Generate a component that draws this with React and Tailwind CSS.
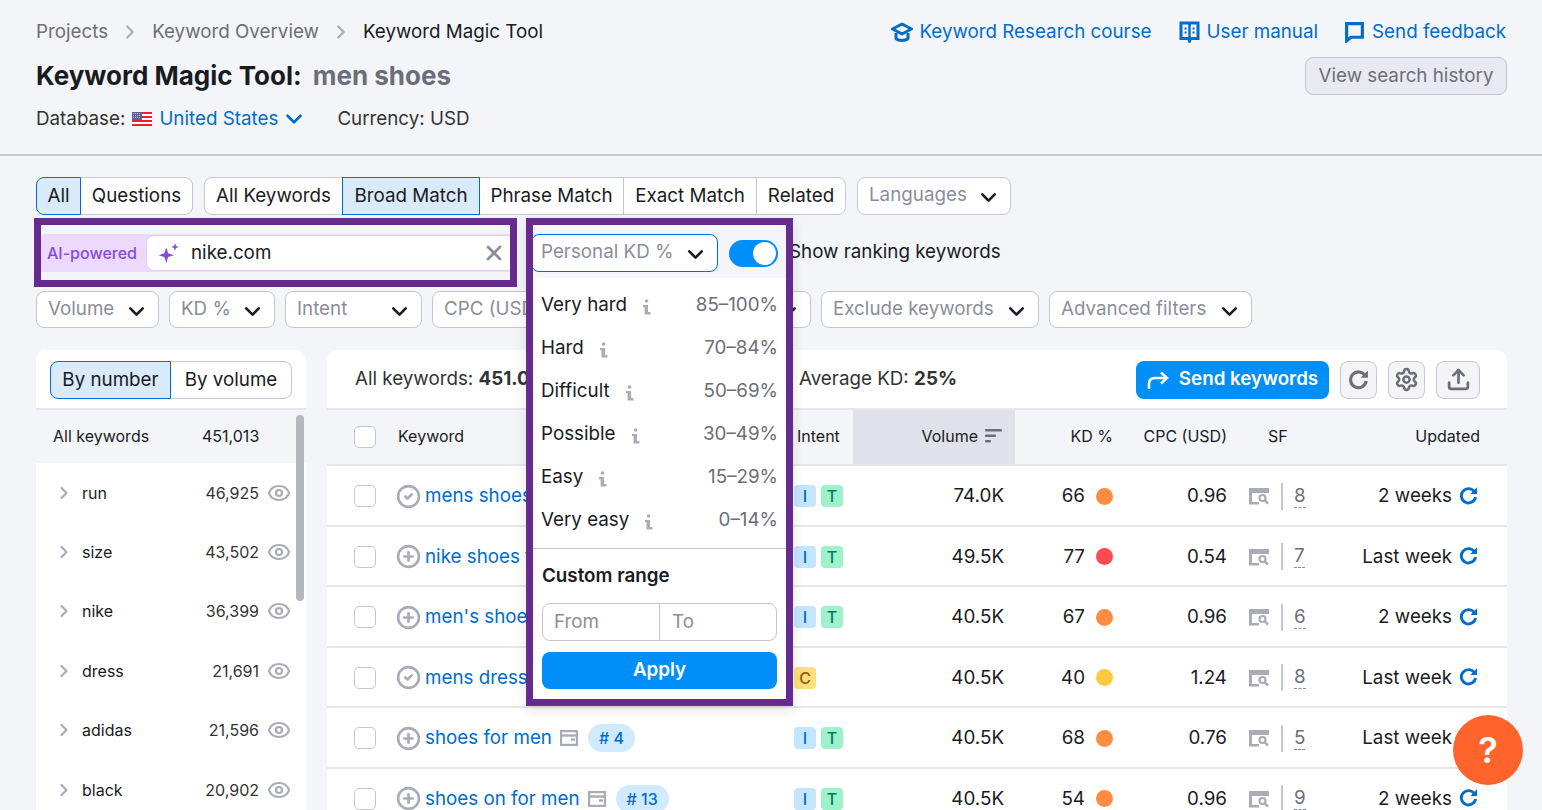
import { ChevronDown, ChevronRight, X, Eye, Settings, Upload, CircleCheck, CirclePlus } from "lucide-react";

const RefreshIcon = ({ className }) => (
    <svg viewBox="0 0 20 20" fill="none" className={className}>
        <path d="M16.4 6.4A7.5 7.5 0 1 0 17.4 11.5" stroke="currentColor" strokeWidth="3" />
        <path d="M19 1.4V8.4h-7z" fill="currentColor" />
    </svg>
);

const SfIcon = () => (
    <svg viewBox="0 0 22 18" className="w-[22px] h-[18px] text-[#a9abb6]" fill="none">
        <path d="M1 1h20v5H4v9h7v2.5H1z" fill="currentColor" />
        <circle cx="14.5" cy="11" r="3" stroke="currentColor" strokeWidth="2.2" />
        <path d="M16.5 13.2l3.5 3.5" stroke="currentColor" strokeWidth="2.4" />
    </svg>
);

const PageIcon = () => (
    <svg viewBox="0 0 18 16" className="w-[18px] h-[16px] text-[#a9abb6] shrink-0" fill="none">
        <rect x="1" y="1" width="16" height="14" stroke="currentColor" strokeWidth="2.4" />
        <path d="M1 5.5h16" stroke="currentColor" strokeWidth="2.4" />
        <path d="M11 9.5h4" stroke="currentColor" strokeWidth="2.4" />
    </svg>
);

const InfoIcon = () => (
    <svg viewBox="0 0 9 16" className="w-[9px] h-[16px] text-[#a9abb6]" fill="currentColor">
        <circle cx="4.6" cy="2" r="1.8" />
        <path d="M1 6h5v7h2.4v2.4H2.6V8.2H1z" />
    </svg>
);

const SortIcon = () => (
    <svg viewBox="0 0 17 14" className="w-[17px] h-[14px] text-[#6c6e79]" fill="currentColor">
        <rect x="0" y="0" width="17" height="2.6" rx="1" />
        <rect x="0" y="5.5" width="11" height="2.6" rx="1" />
        <rect x="0" y="11" width="6" height="2.6" rx="1" />
    </svg>
);

const Flag = () => (
    <svg viewBox="0 0 20 14" className="w-[20px] h-[14px]">
        <rect width="20" height="14" fill="#fff" />
        <path d="M0 0h20v2H0zM0 4h20v2H0zM0 8h20v2H0zM0 12h20v2H0z" fill="#e8222c" />
        <rect width="10" height="8" fill="#5d5f9e" />
        <path d="M1 1.5h8M1 3.5h8M1 5.5h8" stroke="#c7c9e0" strokeWidth="0.8" strokeDasharray="1 1" />
    </svg>
);

function Seg({ w, active, first, last, children }) {
    return (
        <div
            className={`${w} h-full flex items-center justify-center border text-[18.8px] -ml-px first:ml-0 ${active ? "bg-[#d9ebfa] border-[#006dca] z-10" : "bg-white border-[#c4c7cf]"} ${first ? "rounded-l-[8px]" : ""} ${last ? "rounded-r-[8px]" : ""}`}
        >
            {children}
        </div>
    );
}

function Select({ w, label }) {
    return (
        <div className={`${w} shrink-0 h-[37px] bg-white border border-[#c4c7cf] rounded-[8px] flex items-center justify-between pl-[11px] pr-[9px] pb-[1px] text-[18.8px] text-[#8b8e99]`}>
            <span className="whitespace-nowrap overflow-hidden">{label}</span>
            <ChevronDown className="w-[25px] h-[25px] mt-[4px] text-[#191b23] shrink-0" strokeWidth={2.5} />
        </div>
    );
}

function IconBtn({ w, children }) {
    return (
        <div className={`${w} h-[38px] flex items-center justify-center bg-[#f4f4f6] border border-[#c4c7cf] rounded-[8px] text-[#6c6e79]`}>
            {children}
        </div>
    );
}

const listItems = [
    ["run", "46,925"],
    ["size", "43,502"],
    ["nike", "36,399"],
    ["dress", "21,691"],
    ["adidas", "21,596"],
    ["black", "20,902"],
];

const rows = [
    { kw: "mens shoes", on: true, intent: ["I", "T"], vol: "74.0K", kd: 66, dot: "bg-[#ff8c43]", cpc: "0.96", sf: 8, upd: "2 weeks" },
    { kw: "nike shoes for men", intent: ["I", "T"], vol: "49.5K", kd: 77, dot: "bg-[#ff4953]", cpc: "0.54", sf: 7, upd: "Last week" },
    { kw: "men's shoes", intent: ["I", "T"], vol: "40.5K", kd: 67, dot: "bg-[#ff8c43]", cpc: "0.96", sf: 6, upd: "2 weeks" },
    { kw: "mens dress shoes", on: true, intent: ["C"], vol: "40.5K", kd: 40, dot: "bg-[#fcca3f]", cpc: "1.24", sf: 8, upd: "Last week" },
    { kw: "shoes for men", page: true, rank: "# 4", intent: ["I", "T"], vol: "40.5K", kd: 68, dot: "bg-[#ff8c43]", cpc: "0.76", sf: 5, upd: "Last week" },
    { kw: "shoes on for men", page: true, rank: "# 13", intent: ["I", "T"], vol: "40.5K", kd: 54, dot: "bg-[#ff8c43]", cpc: "0.96", sf: 9, upd: "2 weeks" },
];

const intentColors = {
    I: "bg-[#c4e5fe] text-[#006dca]",
    T: "bg-[#9ef2c9] text-[#007c65]",
    C: "bg-[#fcdf7e] text-[#a75800]",
};

const kdLevels = [
    ["Very hard", "85–100%"],
    ["Hard", "70–84%"],
    ["Difficult", "50–69%"],
    ["Possible", "30–49%"],
    ["Easy", "15–29%"],
    ["Very easy", "0–14%"],
];

const gridCols = "grid grid-cols-[44px_399px_56px_162px_98px_114px_113px_140px] pl-[27px] pr-[27px]";

function KeywordRow({ r }) {
    const StateIcon = r.on ? CircleCheck : CirclePlus;
    return (
        <div className={`${gridCols} h-[60.5px] items-center pt-[2px] border-b-2 border-[#e6e7ed] text-[18.8px] text-[#191b23]`}>
            <div className="w-[22px] h-[22px] rounded-[5px] border border-[#c4c7cf] bg-white" />
            <div className="flex items-center min-w-0 whitespace-nowrap">
                <StateIcon className="w-[25px] h-[25px] text-[#a9abb6] shrink-0 -ml-[2px]" strokeWidth={2.5} />
                <span className="ml-[4px] text-[#006dca]">{r.kw}</span>
                {r.page && <span className="ml-[8px]"><PageIcon /></span>}
                {r.rank && <span className="ml-[10px] h-[28px] px-[11px] rounded-full bg-[#d0ebff] text-[#006dca] text-[16px] font-medium flex items-center">{r.rank}</span>}
            </div>
            <div className="flex gap-[5px] -ml-[3px]">
                {r.intent.map((t) => (
                    <span key={t} className={`w-[22px] h-[22px] rounded-[4px] flex items-center justify-center text-[16px] font-medium ${intentColors[t]}`}>{t}</span>
                ))}
            </div>
            <div className="text-right pr-[11px]">{r.vol}</div>
            <div className="flex items-center justify-end gap-[11px]">
                <span>{r.kd}</span>
                <span className={`w-[17px] h-[17px] rounded-full ${r.dot}`} />
            </div>
            <div className="text-right">{r.cpc}</div>
            <div className="flex items-center pl-[21px]">
                <SfIcon />
                <span className="w-[2px] h-[27px] bg-[#c4c7cf] ml-[11px]" />
                <span className="ml-[11px] text-[#6c6e79] border-b border-dashed border-[#8b8e99] leading-[22px]">{r.sf}</span>
            </div>
            <div className="flex items-center justify-end whitespace-nowrap">
                <span>{r.upd}</span>
                <RefreshIcon className="w-[19px] h-[19px] ml-[7px] mr-[2px] mb-[2px] text-[#006dca]" />
            </div>
        </div>
    );
}

export default function App() {
    return (
        <div className="relative h-[810px] overflow-hidden bg-[#f4f5f9] text-[#191b23] font-['Inter',sans-serif]">
            {/* page header */}
            <div className="h-[156px] border-b-2 border-[#c4c7cf] px-[36px] pt-[19px] relative">
                <div className="flex justify-between items-center h-[26px] text-[18.8px]">
                    <div className="flex items-center text-[#6c6e79]">
                        <span>Projects</span>
                        <ChevronRight className="w-[22px] h-[22px] mx-[11px] text-[#a9abb6]" strokeWidth={2.4} />
                        <span>Keyword Overview</span>
                        <ChevronRight className="w-[22px] h-[22px] mx-[11px] text-[#a9abb6]" strokeWidth={2.4} />
                        <span className="text-[#191b23]">Keyword Magic Tool</span>
                    </div>
                    <div className="flex items-center text-[#006dca]">
                        <svg viewBox="0 0 22 20" className="w-[22px] h-[20px] mr-[6px]" fill="none">
                            <path d="M11 2L20.5 7 11 12 1.5 7z" stroke="currentColor" strokeWidth="3" strokeLinejoin="round" />
                            <path d="M5 11v5.5c2 2.5 10 2.5 12 0V11" stroke="currentColor" strokeWidth="3" />
                        </svg>
                        <span>Keyword Research course</span>
                        <svg viewBox="0 0 20 22" className="w-[21px] h-[22px] ml-[27px] mr-[7px]" fill="none">
                            <path d="M1.5 2h7.5l1 1 1-1h7.5v15.5H11l-1 2.5-1-2.5H1.5z" stroke="currentColor" strokeWidth="3" />
                            <path d="M10 3v14" stroke="currentColor" strokeWidth="2.4" />
                            <path d="M5 7.5h2M5 11.5h2M13 7.5h2M13 11.5h2" stroke="currentColor" strokeWidth="2.2" />
                        </svg>
                        <span>User manual</span>
                        <svg viewBox="0 0 18 20" className="w-[19px] h-[21px] ml-[27px] mr-[8px]" fill="none">
                            <path d="M1.5 1.5h15v13H5.5l-4 3.5z" stroke="currentColor" strokeWidth="3" />
                        </svg>
                        <span>Send feedback</span>
                    </div>
                </div>
                <div className="flex items-center mt-[14px] h-[32px]">
                    <span className="text-[26px] font-bold">Keyword Magic Tool:</span>
                    <span className="text-[26px] font-bold text-[#6c6e79] ml-[11px]">men shoes</span>
                </div>
                <div className="flex items-center mt-[15px] text-[18.8px] h-[26px]">
                    <span className="text-[#333]">Database:</span>
                    <span className="ml-[7px]"><Flag /></span>
                    <span className="ml-[7px] text-[#006dca]">United States</span>
                    <ChevronDown className="w-[26px] h-[26px] ml-[3px] text-[#006dca]" strokeWidth={2.4} />
                    <span className="ml-[30px] text-[#333]">Currency: USD</span>
                </div>
                <div className="absolute right-[35px] top-[57px] w-[202px] h-[38px] flex items-center justify-center bg-[#e9eaef] border border-[#c4c7cf] rounded-[8px] text-[18.8px] text-[#6c6e79]">
                    View search history
                </div>
            </div>

            {/* filters */}
            <div className="px-[36px] pt-[21px]">
                <div className="flex h-[38px]">
                    <div className="flex h-full">
                        <Seg w="w-[45px]" active first>All</Seg>
                        <Seg w="w-[113px]" last>Questions</Seg>
                    </div>
                    <div className="flex h-full ml-[11px]">
                        <Seg w="w-[139px]" first>All Keywords</Seg>
                        <Seg w="w-[138px]" active>Broad Match</Seg>
                        <Seg w="w-[145px]">Phrase Match</Seg>
                        <Seg w="w-[134px]">Exact Match</Seg>
                        <Seg w="w-[90px]" last>Related</Seg>
                    </div>
                    <div className="ml-[11px] h-full w-[154px] bg-white border border-[#c4c7cf] rounded-[8px] flex items-center justify-between pl-[11px] pr-[9px] pb-[1px] text-[18.8px] text-[#8b8e99]">
                        Languages
                        <ChevronDown className="w-[25px] h-[25px] mt-[4px] text-[#191b23]" strokeWidth={2.5} />
                    </div>
                </div>

                <div className="flex items-center h-[38px] mt-[19px]">
                    <div className="w-[480px] h-[38px] flex items-center bg-[#ecd9fd] rounded-[8px] pl-[11px] pr-[1px] shrink-0">
                        <span className="w-[99px] text-[16px] font-medium text-[#8649e1] whitespace-nowrap">AI-powered</span>
                        <div className="flex-1 h-[36px] bg-white rounded-[8px] flex items-center pl-[11px] pr-[6px] border border-[#e6ccff] text-[18.8px]">
                            <svg viewBox="0 0 20 20" className="w-[22px] h-[22px] text-[#8649e1]" fill="currentColor">
                                <path d="M7.5 5l1.7 5.3 5.3 1.7-5.3 1.7L7.5 19l-1.7-5.3L.5 12l5.3-1.7z" />
                                <path d="M15.5 1l.9 2.6 2.6.9-2.6.9-.9 2.6-.9-2.6-2.6-.9 2.6-.9z" />
                            </svg>
                            <span className="ml-[11px]">nike.com</span>
                            <X className="ml-auto mr-[2px] w-[24px] h-[24px] text-[#8b8e99]" strokeWidth={2.8} />
                        </div>
                    </div>
                    <div className="ml-[15px] w-[187px] h-[38px] bg-white border border-[#006dca] rounded-[8px] flex items-center justify-between pl-[9px] pr-[9px] pb-[1px] text-[18.8px] text-[#8b8e99] shrink-0">
                        Personal KD %
                        <ChevronDown className="w-[25px] h-[25px] mt-[4px] text-[#191b23]" strokeWidth={2.5} />
                    </div>
                    <div className="ml-[11px] w-[49px] h-[27px] rounded-full bg-[#008ff8] flex items-center justify-end pr-[2px] shrink-0">
                        <span className="w-[23px] h-[23px] rounded-full bg-white" />
                    </div>
                    <span className="ml-[11px] pb-[1px] text-[18.8px] whitespace-nowrap">Show ranking keywords</span>
                </div>

                <div className="flex gap-[10px] mt-[19px]">
                    <Select w="w-[123px]" label="Volume" />
                    <Select w="w-[106px]" label="KD %" />
                    <Select w="w-[137px]" label="Intent" />
                    <Select w="w-[379px]" label="CPC (USD)" />
                    <Select w="w-[218px]" label="Exclude keywords" />
                    <Select w="w-[203px]" label="Advanced filters" />
                </div>
            </div>

            {/* content */}
            <div className="flex gap-[21px] px-[36px] pr-[35px] mt-[22px]">
                <div className="relative w-[270px] shrink-0 bg-white rounded-t-[10px]">
                    <div className="h-[60px] flex items-center pl-[14px] border-b-2 border-[#e6e7ed]">
                        <div className="flex h-[38px] mt-[2px]">
                            <Seg w="w-[121px]" active first>By number</Seg>
                            <Seg w="w-[122px]" last>By volume</Seg>
                        </div>
                    </div>
                    <div className="h-[53px] bg-[#f4f5f9] flex items-center pl-[17px] pb-[2px] text-[16px]">
                        <span className="w-[149px]">All keywords</span>
                        <span className="w-[57px] text-right">451,013</span>
                    </div>
                    {listItems.map(([name, count]) => (
                        <div key={name} className="h-[59.4px] flex items-center pl-[18px] text-[16px]">
                            <ChevronRight className="w-[20px] h-[20px] text-[#a9abb6]" strokeWidth={2.6} />
                            <span className="ml-[8px] w-[119px]">{name}</span>
                            <span className="w-[58px] text-right text-[#333]">{count}</span>
                            <Eye className="w-[24px] h-[24px] ml-[8px] text-[#a9abb6]" strokeWidth={2.2} />
                        </div>
                    ))}
                    <div className="absolute right-[2px] top-[65px] w-[8px] h-[186px] rounded-full bg-[#b5b7be]" />
                </div>

                <div className="flex-1 bg-white rounded-t-[10px]">
                    <div className="h-[58px] flex items-center pl-[28px] pr-[27px] text-[18.8px]">
                        <span className="w-[444px] whitespace-nowrap text-[#333] mt-[1px]">All keywords: <b>451.0K</b></span>
                        <span className="text-[#333] mt-[1px]">Average KD: <b>25%</b></span>
                        <div className="ml-auto flex items-center gap-[11px] mt-[1px]">
                            <div className="w-[193px] h-[38px] rounded-[8px] bg-[#008ff8] text-white font-semibold flex items-center justify-center">
                                <svg viewBox="0 0 22 18" className="w-[22px] h-[18px] mr-[10px]" fill="none" stroke="currentColor" strokeWidth="2.6">
                                    <path d="M2 18v-5c0-4 2-6 6-6h11" />
                                    <path d="M14 1.5l6 5.5-6 5.5" />
                                </svg>
                                Send keywords
                            </div>
                            <IconBtn w="w-[37px]"><RefreshIcon className="w-[21px] h-[21px]" /></IconBtn>
                            <IconBtn w="w-[37px]"><Settings className="w-[25px] h-[25px]" strokeWidth={2.4} /></IconBtn>
                            <IconBtn w="w-[44px]"><Upload className="w-[25px] h-[25px]" strokeWidth={2.6} /></IconBtn>
                        </div>
                    </div>
                    <div className={`${gridCols} h-[58px] items-center bg-[#f4f5f9] border-y-2 border-[#e6e7ed] text-[16px]`}>
                        <div className="w-[22px] h-[22px] rounded-[5px] border border-[#c4c7cf] bg-white" />
                        <div className="mb-[3px]">Keyword</div>
                        <div className="mb-[3px]">Intent</div>
                        <div className="h-full bg-[#e0e1e9] flex items-center justify-end gap-[7px] pr-[13px] pb-[3px]">
                            Volume
                            <SortIcon />
                        </div>
                        <div className="text-right mb-[3px]">KD %</div>
                        <div className="text-right mb-[3px]">CPC (USD)</div>
                        <div className="pl-[41px] mb-[3px]">SF</div>
                        <div className="text-right mb-[3px]">Updated</div>
                    </div>
                    {rows.map((r) => (
                        <KeywordRow key={r.kw} r={r} />
                    ))}
                </div>
            </div>

            {/* highlight frames over the page */}
            <div className="absolute left-[34px] top-[218px] w-[483px] h-[69px] border-[7px] border-[#672a8f]" />
            <div className="absolute left-[526px] top-[218px] w-[267px] h-[488px] border-[7px] border-[#672a8f] flex flex-col shadow-[0_4px_12px_rgba(25,27,35,0.12)]">
                <div className="h-[53px] shrink-0" />
                <div className="flex-1 bg-white flex flex-col pt-[6px]">
                    {kdLevels.map(([name, range]) => (
                        <div key={name} className="h-[43px] shrink-0 flex items-center pl-[8px] pr-[8px] text-[18.8px]">
                            <span>{name}</span>
                            <span className="ml-[15px] mt-[2px]"><InfoIcon /></span>
                            <span className="ml-auto text-[#6c6e79]">{range}</span>
                        </div>
                    ))}
                    <div className="h-px bg-[#c4c7cf] mt-[6px]" />
                    <div className="text-[18.8px] font-semibold pl-[9px] mt-[14px] leading-[26px]">Custom range</div>
                    <div className="flex mx-[9px] mt-[14px] h-[38px] border border-[#c4c7cf] rounded-[8px] text-[18.8px] text-[#8b8e99]">
                        <div className="w-[117px] flex items-center pl-[11px] border-r border-[#c4c7cf]">From</div>
                        <div className="flex-1 flex items-center pl-[12px]">To</div>
                    </div>
                    <div className="mx-[9px] mt-[11px] h-[37px] rounded-[8px] bg-[#008ff8] text-white text-[18.8px] font-semibold flex items-center justify-center">
                        Apply
                    </div>
                </div>
            </div>

            <div className="absolute left-[1453px] top-[715px] w-[70px] h-[70px] rounded-full bg-[#ff642d] flex items-center justify-center text-white text-[36px] font-semibold">
                ?
            </div>
        </div>
    );
}
